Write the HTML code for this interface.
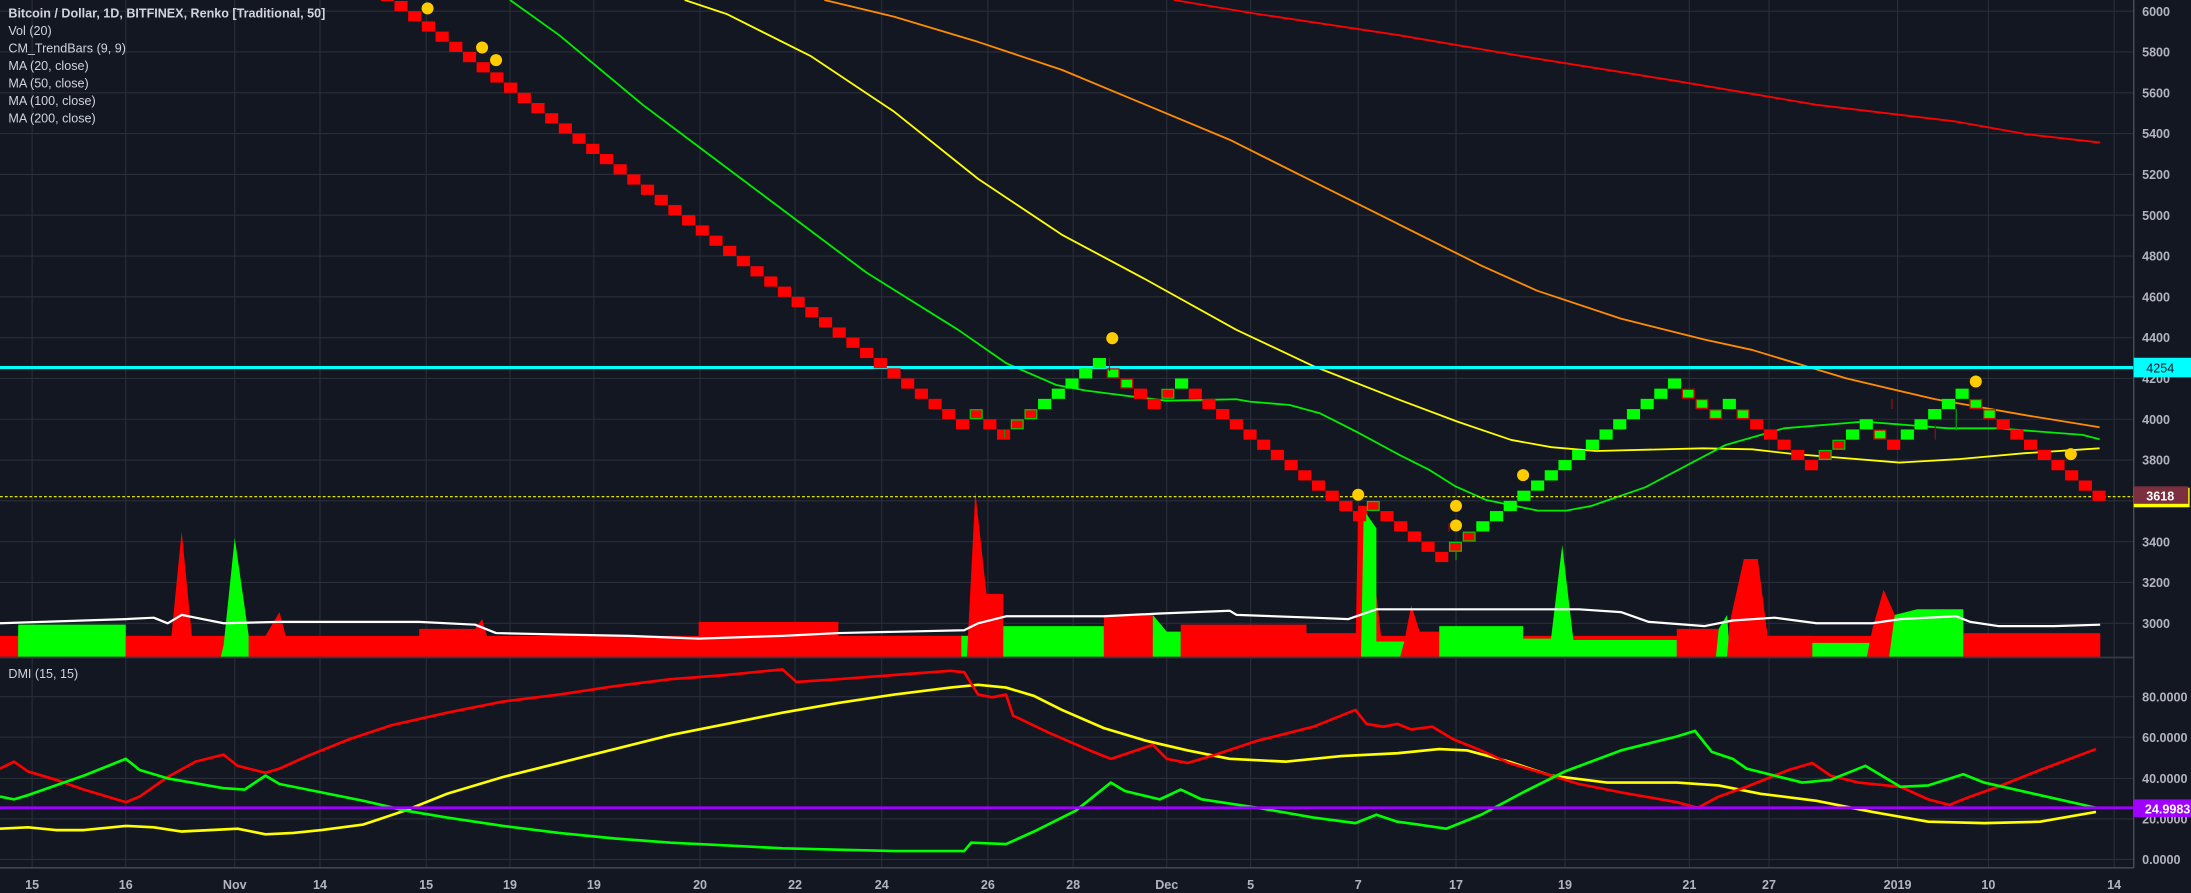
<!DOCTYPE html>
<html><head><meta charset="utf-8">
<style>
html,body{margin:0;padding:0;background:#131722;overflow:hidden;}
svg{display:block;}
text{font-family:"Liberation Sans",sans-serif;}
</style></head>
<body>
<svg id="c" width="2191" height="893" viewBox="0 0 1568 639" preserveAspectRatio="none" xmlns="http://www.w3.org/2000/svg">
<rect x="0" y="0" width="1568" height="639" fill="#131722"/>
<g id="grid" stroke="#2a2e39" stroke-width="0.8"></g>
<g id="vol"></g>
<g id="ma" fill="none" stroke-linejoin="round"></g>
<line x1="0" y1="263" x2="1527" y2="263" stroke="#00ffff" stroke-width="2.2"/>
<line x1="0" y1="355.4" x2="1527" y2="355.4" stroke="#ffff00" stroke-width="0.8" stroke-dasharray="2,1.5"/>
<g id="bricks"></g>
<g id="dots" fill="#ffcc00"></g>
<g id="dmi" fill="none" stroke-width="1.9" stroke-linejoin="round"></g>
<line x1="0" y1="470.5" x2="1527" y2="470.5" stroke="#363a45" stroke-width="1.2"/>
<line x1="1527" y1="0" x2="1527" y2="621" stroke="#4a4e59" stroke-width="1"/>
<line x1="0" y1="621" x2="1527" y2="621" stroke="#4a4e59" stroke-width="1"/>
<g id="labels" fill="#b2b5be" font-size="9" font-weight="bold"></g>
<g fill="#d1d4dc" font-size="9">
<text x="6" y="12.5" font-weight="bold">Bitcoin / Dollar, 1D, BITFINEX, Renko [Traditional, 50]</text>
<text x="6" y="25">Vol (20)</text>
<text x="6" y="37.5">CM_TrendBars (9, 9)</text>
<text x="6" y="50">MA (20, close)</text>
<text x="6" y="62.5">MA (50, close)</text>
<text x="6" y="75">MA (100, close)</text>
<text x="6" y="87.5">MA (200, close)</text>
<text x="6" y="485">DMI (15, 15)</text>
</g>
<rect x="1527" y="256" width="41" height="14" fill="#00ffff"/>
<text x="1536" y="266.5" font-size="9" fill="#131722">4254</text>
<rect x="1527" y="349" width="40" height="14" fill="#ffff00"/>
<rect x="1527" y="348" width="39" height="12.5" fill="#7b2f3f"/>
<text x="1536" y="358" font-size="9" font-weight="bold" fill="#ffffff">3618</text>
<rect x="1527" y="572" width="41" height="12.6" fill="#a000ff"/>
<text x="1535" y="582" font-size="9" font-weight="bold" fill="#ffffff">24.9983</text>
</svg>
<script>
var NS="http://www.w3.org/2000/svg";
function el(p,t,a,txt){var e=document.createElementNS(NS,t);for(var k in a)e.setAttribute(k,a[k]);if(txt!==undefined)e.textContent=txt;document.getElementById(p).appendChild(e);return e;}
function py(p){return 300+(4000-p)*0.146;}
// grid
var dates=[[23,"15"],[90,"16"],[168,"Nov"],[229,"14"],[305,"15"],[365,"19"],[425,"19"],[501,"20"],[569,"22"],[631,"24"],[707,"26"],[768,"28"],[835,"Dec"],[895,"5"],[972,"7"],[1042,"17"],[1120,"19"],[1209,"21"],[1266,"27"],[1358,"2019"],[1423,"10"],[1513,"14"]];
dates.forEach(function(d){el("grid","line",{x1:d[0],y1:0,x2:d[0],y2:621});el("labels","text",{x:d[0],y:636,"text-anchor":"middle"},d[1]);});
for(var p=6000;p>=3000;p-=200){var y=py(p);el("grid","line",{x1:0,y1:y,x2:1527,y2:y});if(p!=3600)el("labels","text",{x:1533,y:y+3.3},p);}
el("grid","line",{x1:1527,y1:0,x2:1527,y2:621});
[[80,498.5],[60,527.5],[40,557],[20,586],[0,615]].forEach(function(d){el("grid","line",{x1:0,y1:d[1],x2:1527,y2:d[1]});el("labels","text",{x:1533,y:d[1]+3.3},d[0].toFixed(4));});
function pts(a){return a.map(function(q){return q.join(",")}).join(" ");}
// volume
function vp(c,a){el("vol","polygon",{points:pts(a),fill:c});}
var R="#ff0000",G="#00ff00";
vp(R,[[0,470],[0,455],[1500,455],[1503,453],[1503,470]]);
vp(R,[[1405,453],[1503,453],[1503,470],[1405,470]]);
vp(G,[[13,470],[13,447],[90,447],[90,470]]);
vp(R,[[90,470],[90,455],[110,455],[110,462],[122,462],[130,380],[138,462],[158,460],[158,470]]);
vp(G,[[158,470],[160,462],[168,385],[178,455],[178,470]]);
vp(R,[[178,470],[178,455],[190,455],[200,438],[205,457],[300,457],[300,450],[340,450],[345,443],[350,460],[500,460],[500,445],[600,445],[600,455],[690,455],[690,470]]);
vp(G,[[688,470],[688,455],[694,455],[694,470]]);
vp(R,[[692,470],[698,352],[706,425],[718,425],[718,470]]);
vp(G,[[718,470],[718,448],[790,448],[790,470]]);
vp(R,[[790,470],[790,440],[825,440],[825,470]]);
vp(G,[[825,470],[825,440],[835,452],[845,452],[845,470]]);
vp(R,[[845,470],[845,447],[935,447],[935,453],[972,453],[972,470]]);
vp(R,[[970,470],[972,362],[978,362],[990,470]]);
vp(G,[[974,470],[976,365],[985,378],[985,459],[1005,459],[1005,470]]);
vp(R,[[1002,470],[1005,459],[1010,433],[1016,452],[1030,452],[1030,470]]);
vp(G,[[1030,470],[1030,448],[1090,448],[1090,457],[1110,457],[1118,390],[1126,458],[1200,458],[1200,470]]);
vp(R,[[1200,470],[1200,450],[1230,450],[1230,470]]);
vp(G,[[1228,470],[1230,450],[1236,440],[1238,470]]);
vp(R,[[1236,470],[1238,445],[1248,400],[1258,400],[1265,455],[1297,455],[1297,470]]);
vp(G,[[1297,470],[1297,460],[1340,460],[1340,470]]);
vp(R,[[1336,470],[1340,450],[1348,422],[1356,440],[1356,470]]);
vp(G,[[1352,470],[1356,440],[1372,436],[1405,436],[1405,470]]);
// MAs
function line(g,c,w,a){el(g,"polyline",{points:pts(a),stroke:c,"stroke-width":w});}
line("ma","#ffffff",1.6,[[0,446],[60,444],[90,443],[110,442],[120,446],[130,440],[140,442],[160,446],[200,445],[300,445],[340,447],[355,453],[400,454],[450,455],[500,457],[560,455],[600,453],[690,451],[700,446],[720,441],[790,441],[830,439],[880,437],[885,440],[940,442],[965,443],[985,436],[1030,436],[1090,436],[1130,436],[1160,438],[1180,445],[1220,448],[1240,444],[1270,442],[1300,446],[1340,446],[1360,443],[1400,441],[1410,445],[1430,448],[1470,448],[1503,447]]);
line("ma","#ff0000",1.3,[[840,0],[900,10],[1000,25],[1100,42],[1200,58],[1300,75],[1400,87],[1450,96],[1503,102]]);
line("ma","#ff8c00",1.3,[[590,0],[640,12],[700,30],[760,50],[820,75],[880,100],[940,130],[1000,160],[1060,190],[1100,208],[1160,228],[1220,243],[1254,250.4],[1321,270.7],[1385,285.7],[1449,297],[1502.6,305.7]]);
line("ma","#ffff00",1.3,[[490,0],[520,10],[580,40],[640,80],[700,128],[760,168],[820,200],[884.8,236],[940,262],[1001.7,286.2],[1043,301.7],[1081.5,314.8],[1110.3,320],[1142.2,322.7],[1218.9,320.8],[1254,321.5],[1282.8,324.8],[1359.4,331],[1401,328.6],[1449,324.3],[1502.6,320.8]]);
line("ma","#00ee00",1.3,[[365,0],[400,25],[460,75],[500,105],[560,150],[620,195],[685.7,236],[720.3,260],[756,275.5],[777.5,279.5],[810.7,283.8],[834.8,286.7],[884.8,285.7],[894.4,287.4],[923,289.8],[944.5,295.7],[970.7,308.9],[1001.7,325.6],[1023,336.3],[1041,347.7],[1063.7,357.8],[1100.7,365.4],[1121,365.4],[1139,362],[1177.4,348.7],[1234.9,318.4],[1276.5,306.5],[1333.7,301.7],[1394.5,306.5],[1429.6,306.5],[1490.4,311.2],[1502.6,314.3]]);
// bricks
var seq=[];
for(var t=6300;t>=4100;t-=50)seq.push(["r",t]);
var rest="r4050 r4000 H4050 r4000 r3950 H4000 H4050 g4100 g4150 g4200 g4250 g4300 K4250 K4200 r4150 r4100 H4150 g4200 r4150 r4100 r4050 r4000 r3950 r3900 r3850 r3800 r3750 r3700 r3650 r3600 r3550 H3600 r3550 r3500 r3450 r3400 r3350 H3400 H3450 g3500 g3550 g3600 g3650 g3700 g3750 g3800 g3850 g3900 g3950 g4000 g4050 g4100 g4150 g4200 K4150 K4100 K4050 g4100 K4050 r4000 r3950 r3900 r3850 r3800 H3850 H3900 g3950 g4000 K3950 r3900 g3950 g4000 g4050 g4100 g4150 K4100 K4050 r4000 r3950 r3900 r3850 r3800 r3750 r3700 r3650".split(" ");
rest.forEach(function(s){seq.push([s[0],+s.slice(1)]);});
var N=seq.length,step=9.8,h=7.3;
seq.forEach(function(b,i){
 var x=1497.5-(N-1-i)*step, y=py(b[1]);
 if(x<-10)return;
 var f,s;
 if(b[0]=="r"){f=R;s="none";}else if(b[0]=="g"){f=G;s="none";}
 else if(b[0]=="H"){f=R;s="#00cc00";}else{f=G;s="#dd0000";}
 el("bricks","rect",{x:x+(s=="none"?0:0.5),y:y+(s=="none"?0:0.5),width:s=="none"?9.4:8.4,height:s=="none"?h:h-1,fill:f,stroke:s,"stroke-width":s=="none"?0:0.9});
});
function wick(x,y1,y2,c){el("bricks","line",{x1:x,y1:y1,x2:x,y2:y2,stroke:c,"stroke-width":0.9});}
wick(719,py(3950),py(3950)+6,"#0a9a0a");wick(794,py(4300),py(4250)+2,"#9a0a0a");
wick(1037,py(3450)-6,py(3450),"#9a0a0a");wick(1042,py(3350),py(3350)+6,"#0a9a0a");
wick(1354,py(4100),py(4050),"#9a0a0a");wick(1385,py(3950)-3,py(3900),"#9a0a0a");wick(1400,py(4050),py(4000)+8,"#0a9a0a");
// dots
[[306,6],[345,34],[355,43],[796,242],[972,354],[1042,362],[1042,376],[1090,340],[1414,273],[1482,325]].forEach(function(d){el("dots","circle",{cx:d[0],cy:d[1],r:4.3});});
// DMI
line("dmi","#ffff00",1.9,[[0,593],[20,592],[40,594],[60,594],[90,591],[110,592],[130,595],[150,594],[170,593],[190,597],[210,596],[230,594],[260,590],[290,580],[320,568],[360,556],[400,546],[440,536],[480,526],[520,518],[560,510],[600,503],[640,497],[680,492],[700,490],[720,492],[740,498],[760,508],[790,521],[820,530],[850,537],[880,543],[920,545],[960,541],[1000,539],[1030,536],[1050,537],[1080,545],[1110,555],[1150,560],[1200,560],[1230,562],[1260,568],[1300,573],[1340,581],[1380,588],[1420,589],[1460,588],[1500,581]]);
line("dmi","#ff0000",1.9,[[0,550],[10,545],[20,552],[40,558],[60,565],[90,574],[100,570],[120,556],[140,545],[160,540],[170,548],[190,553],[200,550],[220,541],[250,529],[280,519],[320,510],[360,502],[400,497],[440,491],[480,486],[520,483],[550,480],[560,479],[570,488],[600,486],[640,483],[680,480],[690,481],[700,497],[710,499],[720,497],[725,512],[750,524],[780,537],[795,543],[810,538],[825,533],[835,543],[850,546],[870,540],[900,530],[940,520],[970,508],[978,518],[990,520],[1000,518],[1010,522],[1025,520],[1040,529],[1060,537],[1080,546],[1100,552],[1130,561],[1160,567],[1200,574],[1215,578],[1230,570],[1250,563],[1280,551],[1297,546],[1310,555],[1330,560],[1360,563],[1380,572],[1395,576],[1410,570],[1430,563],[1460,551],[1500,536]]);
line("dmi","#00ff00",1.9,[[0,570],[10,572],[20,569],[40,562],[60,555],[90,543],[100,551],[120,557],[160,564],[175,565],[190,555],[200,561],[230,567],[260,573],[290,580],[320,585],[360,591],[400,596],[440,600],[480,603],[520,605],[560,607],[600,608],[640,609],[690,609],[695,603],[720,604],[740,595],[770,580],[795,560],[805,566],[830,572],[845,565],[860,572],[900,578],[940,585],[970,589],[985,583],[1000,588],[1015,590],[1035,593],[1060,583],[1090,567],[1120,552],[1160,537],[1200,527],[1213,523],[1225,538],[1240,543],[1250,550],[1290,560],[1310,558],[1335,548],[1360,563],[1380,562],[1405,554],[1420,560],[1460,569],[1500,578]]);
el("dmi","line",{x1:0,y1:578,x2:1527,y2:578,stroke:"#a000ff","stroke-width":2});
</script>
</body></html>
